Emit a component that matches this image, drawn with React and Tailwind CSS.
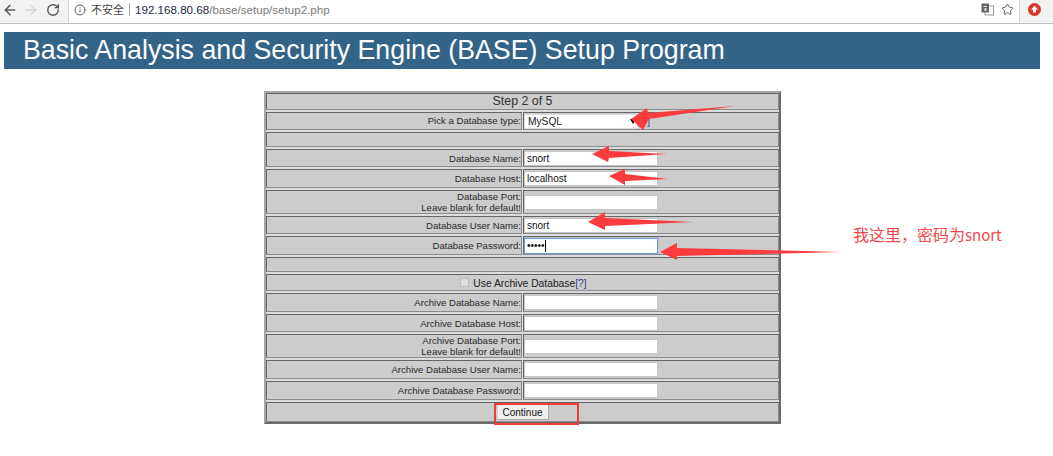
import React from "react";
import { ArrowLeft, ArrowRight, RotateCw, Info, Star } from "lucide-react";

const cell = "border border-t-[#666] border-l-[#666] border-b-[#8c8c8c] border-r-[#8c8c8c] bg-[#cccccc]";

const FormRow = ({ label, hint, value, h, active, mono }) => (
  <div className={`flex gap-[1px] ${h}`}>
    <div className={`${cell} w-[256px] flex flex-col justify-center items-end text-[9.6px] leading-[11px] text-[#2a2a2a]`}>
      <span>{label}</span>
      {hint && <span>{hint}</span>}
    </div>
    <div className={`${cell} flex-1 flex items-center`}>
      <div
        className={`w-[134px] bg-white flex items-center pl-[2px] text-[10px] text-[#111] ${
          active ? "h-[16px] border border-[#6f9bd8] shadow-[0_0_1px_#6f9bd8]" : "h-[15px] border border-[#c4c4c4]"
        }`}
      >
        {value}
        {mono && <span className="w-[1px] h-[12px] bg-black" />}
      </div>
    </div>
  </div>
);

const Band = ({ h, children }) => (
  <div className={`${cell} ${h} flex items-center justify-center text-[#222]`}>{children}</div>
);

const Arrow = ({ points }) => <polygon points={points} fill="#fb3b3e" />;

export default function App() {
  return (
    <div className="relative w-[1053px] h-[456px] overflow-hidden bg-white font-['Liberation_Sans',sans-serif]">
      {/* browser chrome */}
      <div className="h-[24px] bg-[#f2f2f2] border-b border-[#bdbdbd] flex">
        <div className="w-[68px] flex items-center gap-[5px] pl-[2px] pb-[4px]">
          <ArrowLeft size={16} strokeWidth={2.2} className="text-[#555]" />
          <ArrowRight size={16} strokeWidth={1.5} className="text-[#c4c4c4]" />
          <RotateCw size={14} strokeWidth={2.4} className="text-[#555] ml-[2px]" />
        </div>
        <div className="w-[952px] h-[23px] bg-white border-l border-r border-[#d0d0d0] flex items-center pb-[4px] pl-[5px] text-[11.6px]">
          <Info size={12} strokeWidth={1.7} className="text-[#444]" />
          <span className="ml-[5px] text-[#444] font-['Noto_Sans_CJK_SC',sans-serif] text-[11px]">不安全</span>
          <span className="ml-[5px] w-[1px] h-[13px] bg-[#aaa]" />
          <span className="ml-[5px] text-[#1b2a4a]">192.168.80.68</span>
          <span className="text-[#7a7a7a]">/base/setup/setup2.php</span>
          <div className="ml-auto flex items-center gap-[7px] pr-[5px]">
            <svg width="13" height="13" viewBox="0 0 13 13">
              <rect x="4" y="3" width="8.5" height="9" fill="#fff" stroke="#999" />
              <rect x="0.5" y="0.5" width="7.5" height="9" fill="#666" />
              <rect x="2.5" y="3" width="3.5" height="1" fill="#ddd" />
              <rect x="3.5" y="5" width="2" height="3" fill="#ddd" />
            </svg>
            <Star size={13} strokeWidth={1.6} className="text-[#555]" />
          </div>
        </div>
        <div className="flex-1 flex justify-start items-start pt-[3px] pl-[8px]">
          <svg width="13" height="13" viewBox="0 0 13 13">
            <circle cx="6.5" cy="6.5" r="6.5" fill="#d9382c" />
            <polygon points="6.5,2.8 10,6.5 8,6.5 8,9.6 5,9.6 5,6.5 3,6.5" fill="#fff" />
          </svg>
        </div>
      </div>

      {/* page header */}
      <div className="ml-[4px] mt-[8px] w-[1036px] h-[37px] bg-[#336488] flex items-center pl-[19px] text-white text-[26.75px] leading-none">
        Basic Analysis and Security Engine (BASE) Setup Program
      </div>

      {/* setup form */}
      <div className="ml-[264px] mt-[22px] w-[517px] h-[333px] border-2 border-t-[#a6a6a6] border-l-[#a6a6a6] border-b-[#6a6a6a] border-r-[#6a6a6a] bg-[#dcdcdc]">
        <div className="flex flex-col gap-[2px] h-full">
          <Band h="h-[17px]"><span className="text-[12.4px] text-[#333]">Step 2 of 5</span></Band>
          <div className="flex gap-[1px] h-[18px]">
            <div className={`${cell} w-[256px] flex items-center justify-end pt-[1px] text-[9.6px] text-[#2a2a2a]`}>Pick a Database type:</div>
            <div className={`${cell} flex-1 flex items-center pt-[1px]`}>
              <div className="w-[114px] h-[15px] bg-white border border-[#ddd] flex items-center pl-[3px] text-[10.2px] text-[#222] relative">
                MySQL
                <span className="absolute right-[1px] top-[4px] w-0 h-0 border-x-[3px] border-x-transparent border-t-[5px] border-t-black" />
              </div>
              <span className="ml-[1px] text-[10px] text-[#33458a]">[?]</span>
            </div>
          </div>
          <Band h="h-[15px]" />
          <FormRow label="Database Name:" value="snort" h="h-[18px]" />
          <FormRow label="Database Host:" value="localhost" h="h-[19px]" />
          <FormRow label="Database Port:" hint="Leave blank for default!" h="h-[24px]" />
          <FormRow label="Database User Name:" value="snort" h="h-[18px]" />
          <FormRow label="Database Password:" value="•••••" h="h-[19px]" active mono />
          <Band h="h-[15px]" />
          <Band h="h-[17px] pt-[2px]">
            <span className="w-[9px] h-[9px] border border-[#bbb] bg-[#ddd] ml-[2px] mr-[4px] mb-[3px]" />
            <span className="text-[10.3px]">Use Archive Database<span className="text-[#33458a]">[?]</span></span>
          </Band>
          <FormRow label="Archive Database Name:" h="h-[19px]" />
          <FormRow label="Archive Database Host:" h="h-[18px]" />
          <FormRow label="Archive Database Port:" hint="Leave blank for default!" h="h-[24px]" />
          <FormRow label="Archive Database User Name:" h="h-[19px]" />
          <FormRow label="Archive Database Password:" h="h-[19px]" />
          <Band h="flex-1">
            <button className="w-[52px] h-[16px] bg-[#efefef] border border-[#d4d4d4] border-b-[#aaa] border-r-[#aaa] text-[10px] text-[#111]">Continue</button>
          </Band>
        </div>
      </div>

      {/* screenshot annotations */}
      <svg className="absolute left-0 top-0 pointer-events-none" width="1053" height="456">
        <Arrow points="631,119 647,108 648,113 735,106 649,119 643,130" />
        <Arrow points="592,154 609,146 609,151 667,154 609,158 608,162" />
        <Arrow points="609,176 625,169 625,174 668,179 625,181 625,185" />
        <Arrow points="588,222 605,212 605,218 693,222 605,226 605,230" />
        <Arrow points="660,252 677,243 677,248 842,252 677,256 677,260" />
      </svg>
      <div className="absolute left-[494px] top-[403px] w-[85px] h-[22px] border-2 border-[#f23a3a]" />
      <div className="absolute left-[853px] top-[224px] text-[16px] leading-[20px] text-[#f4474a] font-['Noto_Sans_CJK_SC',sans-serif]">
        我这里，密码为<span className="text-[15px]">snort</span>
      </div>
    </div>
  );
}
